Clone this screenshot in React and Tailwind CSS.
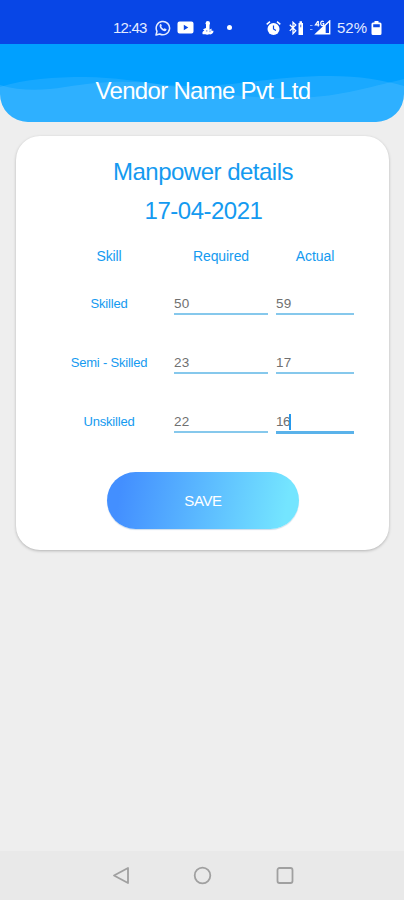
import React from "react";

const rows = [
  { label: "Skilled", required: "50", actual: "59" },
  { label: "Semi - Skilled", required: "23", actual: "17" },
  { label: "Unskilled", required: "22", actual: "16", active: true },
];

function StatusBar() {
  return (
    <div className="flex h-[44px] items-center bg-[#0846e6] pl-[113px] pt-[11px] text-[15px] leading-[18px] text-[#e3ebff]">
      <span className="w-[34px] whitespace-nowrap tracking-[-0.8px]">12:43</span>
      <svg className="ml-2 shrink-0" width="16" height="16" viewBox="0 0 16 16" fill="none">
        <path d="M1 15l1-3.7A6.7 6.7 0 1 1 4.7 14L1 15z" stroke="#e3ebff" strokeWidth="1.5" strokeLinejoin="round" />
        <path d="M5.1 4.3c.5-.5 1-.4 1.2.1l.5 1.2c.1.4-.6.9-.5 1.2.5 1 1.3 1.8 2.4 2.3.4.1.9-.9 1.2-.7l1.4.7c.5.3.1 1.3-.4 1.7-1.1.8-2.8.2-4.4-1.200C4.800 8.200 3.900 5.600 5.100 4.300z" fill="#e3ebff" />
      </svg>
      <svg className="ml-[6px] shrink-0" width="17" height="13" viewBox="0 0 17 13">
        <path fillRule="evenodd" fill="#fff" d="M2.500.5h12a2 2 0 0 1 2 2v8a2 2 0 0 1-2 2h-12a2 2 0 0 1-2-2v-8a2 2 0 0 1 2-2zM6.800 3.700v5.600l4.500-2.800z" />
      </svg>
      <svg className="ml-[8px] shrink-0" width="12" height="14" viewBox="0 0 12 14" fill="#fff">
        <circle cx="5.800" cy="2.300" r="2.200" />
        <path d="M4 3.500h3.500v5.300l2-1.300v2.300h2c0 2.500-1.700 4-4.200 3.500-1.500.6-2.900.6-4 0H.7c-.8-1.600.1-3.300 1.700-3.600L1 8.300l3-1.300z" />
        <path d="M4.800 9v1.700M8 9.500v1.700" stroke="#0846e6" strokeWidth=".6" />
      </svg>
      <span className="ml-[13px] h-[5px] w-[5px] shrink-0 rounded-full bg-white" />
      <svg className="ml-[34px] shrink-0" width="15" height="16" viewBox="0 0 15 16">
        <circle cx="7.500" cy="9" r="6" fill="#fff" />
        <path d="M.7 4.400L4 1.600M14.300 4.400L11 1.600" stroke="#fff" strokeWidth="1.500" />
        <path d="M7.500 5.500V9l2.400 1.500" fill="none" stroke="#0846e6" strokeWidth="1.200" />
      </svg>
      <svg className="ml-[8px] shrink-0" width="15" height="14" viewBox="0 0 15 14">
        <path d="M.8 3.800l6 6L4 12.700V1.300l2.800 2.600-6 6" fill="none" stroke="#fff" strokeWidth="1.300" />
        <path d="M9.500 2h1V.3h2.500V2h1v11.900H9.500z" fill="#fff" />
        <path d="M11.750 3.700v2.600" stroke="#0846e6" strokeWidth=".8" />
      </svg>
      <svg className="ml-[6px] shrink-0" width="21" height="15" viewBox="0 0 21 15">
        <path d="M0 5.500h2.500M0 9.500h2.500" stroke="#8fb0ff" strokeWidth="1.200" />
        <path d="M19.700 1v12.800H6z" fill="none" stroke="#fff" strokeWidth="1.400" />
        <path d="M15.700 5v8.800H6z" fill="#fff" />
        <path d="M8 1L5.400 4.800h4M8.300 1v5.500M13.700 1.800c-2-1.400-3.400.1-2.800 2.500.5 1.700 2.400 1.500 2.800.8V3.700h-1.200" fill="none" stroke="#fff" strokeWidth="1.200" />
      </svg>
      <span className="ml-[6px] w-[31px] whitespace-nowrap">52%</span>
      <svg className="ml-[3px] shrink-0" width="11" height="14" viewBox="0 0 11 14">
        <path fillRule="evenodd" fill="#fff" d="M3.500 0h4v1.500H9a1.500 1.500 0 0 1 1.500 1.500v9.500A1.500 1.500 0 0 1 9 14H2a1.500 1.500 0 0 1-1.500-1.500V3A1.500 1.500 0 0 1 2 1.500h1.500zM2.200 3.300v3h6.600v-3z" />
      </svg>
    </div>
  );
}

function Header() {
  return (
    <header className="relative flex h-[78px] items-center justify-center overflow-hidden rounded-b-[28px] bg-[#00a0ff] pt-[16px]">
      <svg className="absolute inset-0" width="404" height="78" viewBox="0 0 404 78" fill="none">
        <path d="M0 43C25 35 55 33 85 33c65 1 120 20 195 21 55 1 85-10 124-19v43H0z" fill="#fff" fillOpacity=".09" />
        <path d="M0 41c20 6 42 6 65 2 40-6 65-7 100-2 60 5 100-9 165-9 30 0 52 4 74 10v36H0z" fill="#fff" fillOpacity=".1" />
      </svg>
      <h1 className="relative left-[1px] whitespace-nowrap text-[24px] leading-7 tracking-[-0.7px] text-white">Vendor Name Pvt Ltd</h1>
    </header>
  );
}

function Field({ value, active }) {
  return (
    <div className={`flex items-center text-[13.5px] leading-4 text-[#707070] ${active ? "h-[23px] border-b-[3px] border-[#5ab2ea] pt-px" : "h-[22px] border-b-2 border-[#86c8ec] pt-px"}`}>
      <span className={active ? "tracking-[-0.4px]" : "tracking-[0.3px]"}>{value}</span>
      {active && <span className="-ml-px h-[16px] w-[2px] bg-[#2499ed]" />}
    </div>
  );
}

export default function App() {
  return (
    <div className="flex h-[900px] w-[404px] flex-col overflow-hidden bg-[#eeeeee] font-['Liberation_Sans',Arial,sans-serif]">
      <StatusBar />
      <Header />
      <main className="ml-4 mt-[14px] flex h-[414px] w-[373px] flex-col rounded-[24px] bg-white pt-[22px] text-[#149af0] shadow-[0_1px_3px_rgba(0,0,0,0.25)]">
        <h2 className="pl-px text-center text-[24px] leading-7 tracking-[-0.5px]">Manpower details</h2>
        <p className="mt-[11px] pl-[2px] text-center text-[24px] leading-7 tracking-[-0.5px]">17-04-2021</p>
        <div className="ml-9 mt-[22px] grid w-[302px] grid-cols-[114px_94px_78px] gap-x-2 text-center text-[14px] leading-[18px] tracking-[-0.1px]">
          <span>Skill</span>
          <span>Required</span>
          <span>Actual</span>
        </div>
        <div className="ml-9 mt-[28px] flex w-[302px] flex-col">
          {rows.map((r) => (
            <div key={r.label} className="grid h-[59px] grid-cols-[114px_94px_78px] items-start gap-x-2">
              <span className="text-center text-[13px] leading-[22px] tracking-[-0.2px]">{r.label}</span>
              <Field value={r.required} />
              <Field value={r.actual} active={r.active} />
            </div>
          ))}
        </div>
        <button className="ml-[91px] mt-[2px] h-[57px] w-[192px] rounded-full bg-[linear-gradient(100deg,#438fff_8%,#74e5ff_92%)] pt-[2px] text-[15px] tracking-[-0.4px] text-white shadow-[0_1px_1px_rgba(0,80,150,0.2)]">SAVE</button>
      </main>
      <nav className="mt-auto flex h-[49px] items-center justify-center bg-[#e9e9e9]">
        <svg width="184" height="20" viewBox="0 0 184 20" fill="none" stroke="#a0a0a0" strokeWidth="1.800" strokeLinejoin="round">
          <path d="M4 9.500l14-7.500v15z" />
          <circle cx="92.500" cy="9.500" r="7.800" />
          <rect x="167.500" y="2" width="15" height="15" rx="2" />
        </svg>
      </nav>
    </div>
  );
}
